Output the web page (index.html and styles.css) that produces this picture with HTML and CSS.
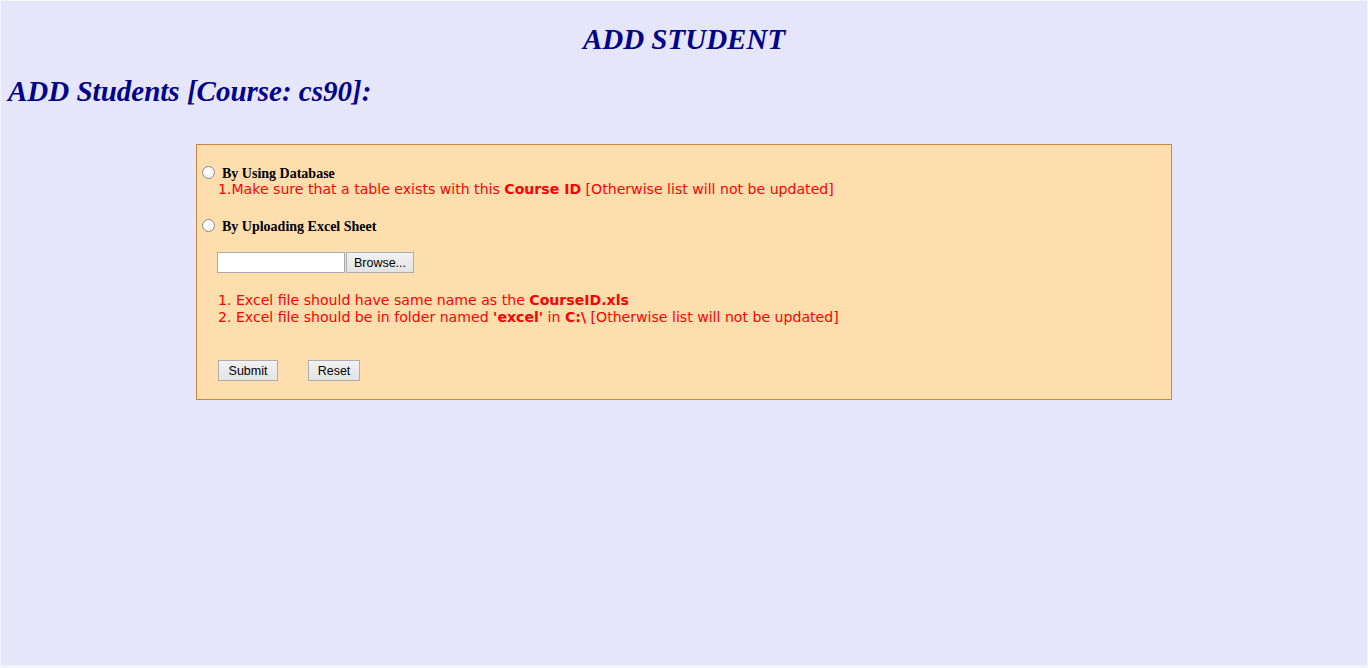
FILE: index.html
```html
<!DOCTYPE html>
<html>
<head>
<meta charset="utf-8">
<title>ADD STUDENT</title>
<link rel="stylesheet" href="styles.css">
</head>
<body>
<div class="page">
  <h1 class="title">ADD STUDENT</h1>
  <h2 class="subtitle">ADD Students [Course: cs90]:</h2>
  <form class="box">
    <label class="option"><span class="radio"></span><span class="opt-label">By Using Database</span></label>
    <div class="note note-db">1.Make sure that a table exists with this <b>Course ID</b> [Otherwise list will not be updated]</div>
    <label class="option option-excel"><span class="radio"></span><span class="opt-label">By Uploading Excel Sheet</span></label>
    <div class="file-row">
      <span class="file-text"></span><span class="btn browse">Browse...</span>
    </div>
    <div class="note notes-excel">
      <div>1. Excel file should have same name as the <b>CourseID.xls</b></div>
      <div>2. Excel file should be in folder named <b>'excel'</b> in <b>C:\</b> [Otherwise list will not be updated]</div>
    </div>
    <div class="actions">
      <span class="btn submit">Submit</span>
      <span class="btn reset">Reset</span>
    </div>
  </form>
</div>
</body>
</html>
```
FILE: styles.css
```css
html, body {
  margin: 0;
  padding: 0;
  background: #f4f4fb;
}
.page {
  margin: 1px 1px 3px 1px;
  height: 664px;
  background: #e6e6fa;
  font-family: "Liberation Serif", serif;
  overflow: hidden;
}
.title {
  margin: 0;
  padding-top: 20px;
  height: 36px;
  line-height: 36px;
  text-align: center;
  font-size: 29px;
  font-style: italic;
  font-weight: bold;
  color: #00008b;
}
.subtitle {
  margin: 0;
  padding-left: 7px;
  padding-top: 16px;
  height: 36px;
  line-height: 36px;
  font-size: 29px;
  font-style: italic;
  font-weight: bold;
  color: #00008b;
}
.box {
  display: block;
  width: 976px;
  box-sizing: border-box;
  border: 1px solid #cd853f;
  background: #ffdead;
  padding: 19px 0 0 5px;
  height: 256px;
  margin: 35px 0 0 195px;
}
.option {
  display: flex;
  align-items: center;
  height: 16px;
}
.radio {
  width: 11px;
  height: 11px;
  border: 1px solid #8a8a8a;
  border-radius: 50%;
  background: radial-gradient(circle at 50% 40%, #ffffff 40%, #e8e8e8 100%);
  margin-right: 7px;
  margin-top: 0;
}
.opt-label {
  font-family: "Liberation Serif", serif;
  font-weight: bold;
  font-size: 14px;
  color: #000;
  margin-top: 3px;
}
.note {
  font-family: "DejaVu Sans", Verdana, sans-serif;
  font-size: 14.1px;
  color: #ff0000;
  padding-left: 16px;
  line-height: 17px;
}
.note b {
  font-weight: bold;
}
.note-db {
  margin-top: 1px;
}
.option-excel {
  margin-top: 19px;
}
.file-row {
  display: flex;
  margin-top: 19px;
  padding-left: 15px;
  height: 21px;
}
.file-text {
  width: 126px;
  height: 19px;
  background: #fff;
  border: 1px solid #a9a9a9;
}
.btn {
  display: inline-flex;
  align-items: center;
  justify-content: center;
  box-sizing: border-box;
  height: 21px;
  border: 1px solid #adadad;
  background: linear-gradient(#f2f2f2, #e3e3e3);
  font-family: "Liberation Sans", Arial, sans-serif;
  font-size: 12.5px;
  color: #000;
}
.browse {
  width: 68px;
  margin-left: 1px;
}
.notes-excel {
  margin-top: 19px;
}
.actions {
  display: flex;
  margin-top: 34px;
  padding-left: 16px;
}
.submit {
  width: 60px;
}
.reset {
  width: 52px;
  margin-left: 30px;
}
```
